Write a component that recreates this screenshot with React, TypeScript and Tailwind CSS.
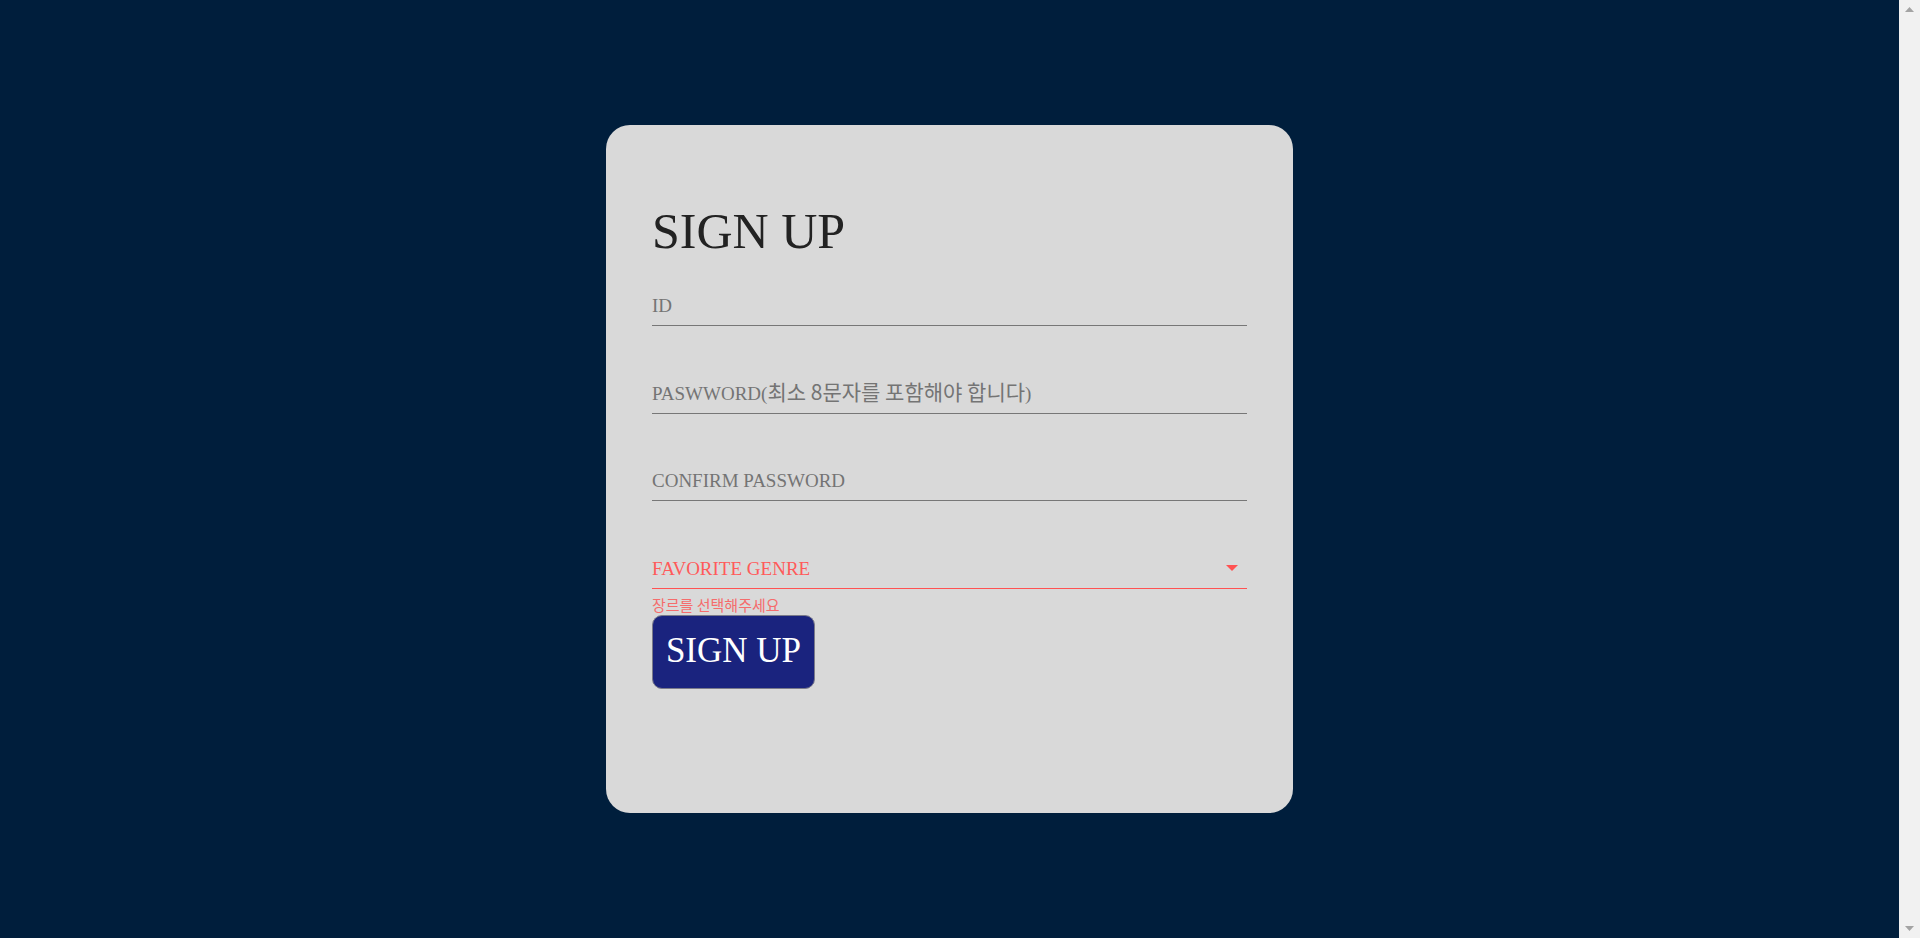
import React from "react";

const serif = "font-['Liberation_Serif','Noto_Sans_CJK_KR',serif]";

function Field({ children }: { children: React.ReactNode }) {
  return (
    <div className="border-b border-[#777777] pb-[7px]">
      <div className={`${serif} text-[19px] leading-[24px] text-[#747474]`}>{children}</div>
    </div>
  );
}

export default function App() {
  return (
    <div className="flex h-screen w-full">
      <div className="flex h-screen flex-1 items-center justify-center bg-[#001e3c]">
        <div className="flex h-[688px] w-[687px] flex-col rounded-[24px] bg-[#d9d9d9] px-[46px] pt-[76px]">
          <h1 className={`${serif} text-[50px] font-normal leading-[60px] text-[#222222]`}>SIGN UP</h1>
          <div className="mt-[33px]">
            <Field>ID</Field>
          </div>
          <div className="mt-[55px]">
            <Field>
              PASWWORD(
              <span className="font-['Noto_Sans_CJK_KR',sans-serif] text-[21px] leading-none">최소 8문자를 포함해야 합니다</span>)
            </Field>
          </div>
          <div className="mt-[55px]">
            <Field>CONFIRM PASSWORD</Field>
          </div>
          <div className="mt-[56px] pb-[7px]">
            <div className="flex items-center justify-between">
              <div className={`${serif} text-[19px] leading-[24px] text-[#ff5a5a]`}>FAVORITE GENRE</div>
              <svg width="12" height="6" viewBox="0 0 12 6" className="mr-[9px] -mt-[2px]">
                <path d="M0 0 L12 0 L6 6 Z" fill="#ff5252" />
              </svg>
            </div>
          </div>
          <div className="h-px w-full bg-[#ff5252]" />
          <div className="mt-[8px] font-['Noto_Sans_CJK_KR',sans-serif] text-[15px] leading-[16px] text-[#f56c6c]">
            장르를 선택해주세요
          </div>
          <button
            type="button"
            className={`${serif} mt-[2px] flex h-[74px] w-[163px] items-center justify-center self-start rounded-[10px] border border-[#7a7a8a] bg-[#1a237e] pb-[4px] text-[35px] leading-none text-white`}
          >
            SIGN UP
          </button>
        </div>
      </div>
      <div className="flex h-screen w-[21px] flex-col items-center justify-between bg-[#f1f1f1] py-[7px]">
        <svg width="9" height="5" viewBox="0 0 9 5">
          <path d="M0 5 L4.5 0 L9 5 Z" fill="#a3a3a3" />
        </svg>
        <svg width="9" height="5" viewBox="0 0 9 5">
          <path d="M0 0 L9 0 L4.5 5 Z" fill="#a3a3a3" />
        </svg>
      </div>
    </div>
  );
}
